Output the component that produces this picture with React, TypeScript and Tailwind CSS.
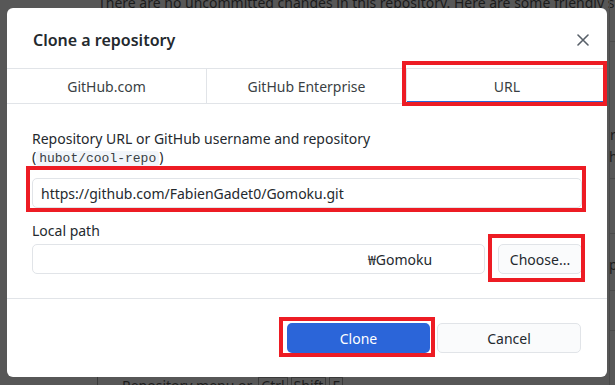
import React from 'react';

const CloseIcon: React.FC = () => (
  <svg width="12" height="12" viewBox="0 0 12 12" fill="none">
    <path d="M1 1L11 11M11 1L1 11" stroke="#586069" strokeWidth="1.6" strokeLinecap="round" />
  </svg>
);

const App: React.FC = () => {
  return (
    <div className="relative w-[615px] h-[385px] overflow-hidden bg-[#575757] font-['Noto_Sans','Liberation_Sans',sans-serif] text-[14px] text-[#24292e]">
      {/* app behind the overlay */}
      <div className="absolute left-[98px] top-[-8px] whitespace-nowrap text-[14px] text-[#1c1c1c]">
        There are no uncommitted changes in this repository. Here are some friendly suggestions
      </div>
      <div className="absolute left-[97px] top-[377px] h-[10px] border-l border-[#3a3a3a]" />
      <div className="absolute left-[122px] top-[375px] flex items-center gap-[3px] whitespace-nowrap text-[14px] text-[#1c1c1c]">
        <span className="mr-[3px]">Repository menu or</span>
        <span className="border border-[#3a3a3a] px-[2px] leading-[15px]">Ctrl</span>
        <span className="border border-[#3a3a3a] px-[2px] leading-[15px]">Shift</span>
        <span className="border border-[#3a3a3a] px-[2px] leading-[15px]">F</span>
      </div>
      <div className="absolute left-[609px] top-0 h-full border-l border-[#4a4a4a]" />
      <div className="absolute left-[609px] top-[41px] w-[10px] border-t border-[#4a4a4a]" />
      <div className="absolute left-[609px] top-[178px] w-[10px] border-t border-[#4a4a4a]" />
      <div className="absolute left-[609px] top-[233px] w-[10px] border-t border-[#4a4a4a]" />
      <div className="absolute left-[609px] top-[290px] w-[10px] border-t border-[#4a4a4a]" />
      <div className="absolute left-[609px] top-[330px] w-[10px] border-t border-[#4a4a4a]" />
      <span className="absolute left-[610px] top-[126px] leading-[18px] text-[14px] text-[#1c1c1c]">r</span>
      <span className="absolute left-[609px] top-[148px] leading-[18px] text-[14px] text-[#1c1c1c]">hi</span>
      <span className="absolute left-[609px] top-[256px] leading-[18px] text-[14px] text-[#1c1c1c]">p</span>

      {/* dialog */}
      <div className="absolute left-[7px] top-[8px] flex h-[369px] w-[600px] flex-col rounded-[6px] bg-white">
        <div className="flex h-[60px] items-center justify-between pl-[26px] pr-[18px] pt-[4px]">
          <h1 className="text-[16px] font-semibold text-[#24292e]">Clone a repository</h1>
          <CloseIcon />
        </div>

        <div className="grid h-[36px] grid-cols-3 border-y border-[#e1e4e8] text-[#3a3f44]">
          <div className="flex items-center justify-center border-r border-[#e1e4e8]">GitHub.com</div>
          <div className="flex items-center justify-center border-r border-[#e1e4e8]">GitHub Enterprise</div>
          <div className="flex items-center justify-center border-b-2 border-[#2b68d8] pt-[2px]">URL</div>
        </div>

        <div className="flex flex-col px-[25px] pt-[26px] pb-[24px]">
          <div className="leading-[18px] text-[#24292e]">
            Repository URL or GitHub username and repository
            <br />
            (<span className="rounded-[3px] bg-[#f1f5fa] px-[3px] font-['Liberation_Mono',monospace] text-[13px] font-normal text-[#3a3f44]">hubot/cool-repo</span>)
          </div>
          <div className="mt-[10px] flex h-[30px] items-center rounded-[5px] border border-[#e1e4e8] px-[8px]">
            https://github.com/FabienGadet0/Gomoku.git
          </div>
          <div className="mt-[14px] leading-[18px]">Local path</div>
          <div className="mt-[4px] flex items-center gap-[13px]">
            <div className="flex h-[30px] flex-1 items-center rounded-[5px] border border-[#e1e4e8] pl-[335px]">
              <span className="font-['Noto_Sans_CJK_KR','Noto_Sans',sans-serif]">₩</span>Gomoku
            </div>
            <button className="h-[30px] w-[84px] rounded-[5px] border border-[#e1e4e8] bg-[#fafbfc] text-[#24292e]">
              Choose...
            </button>
          </div>
        </div>

        <div className="flex flex-1 items-start justify-end gap-[7px] border-t border-[#e1e4e8] pt-[24px] pr-[26px]">
          <button className="h-[30px] w-[143px] rounded-[5px] bg-[#2b65d9] text-white">Clone</button>
          <button className="h-[30px] w-[144px] rounded-[5px] border border-[#e1e4e8] bg-[#fafbfc] text-[#24292e]">
            Cancel
          </button>
        </div>
      </div>

      {/* red annotation boxes */}
      <div className="absolute left-[402px] top-[61px] h-[45px] w-[205px] border-4 border-[#ed1c24]" />
      <div className="absolute left-[26px] top-[166px] h-[46px] w-[560px] border-4 border-[#ed1c24]" />
      <div className="absolute left-[488px] top-[234px] h-[48px] w-[97px] border-4 border-[#ed1c24]" />
      <div className="absolute left-[279px] top-[317px] h-[40px] w-[156px] border-4 border-[#ed1c24]" />
    </div>
  );
};

export default App;
